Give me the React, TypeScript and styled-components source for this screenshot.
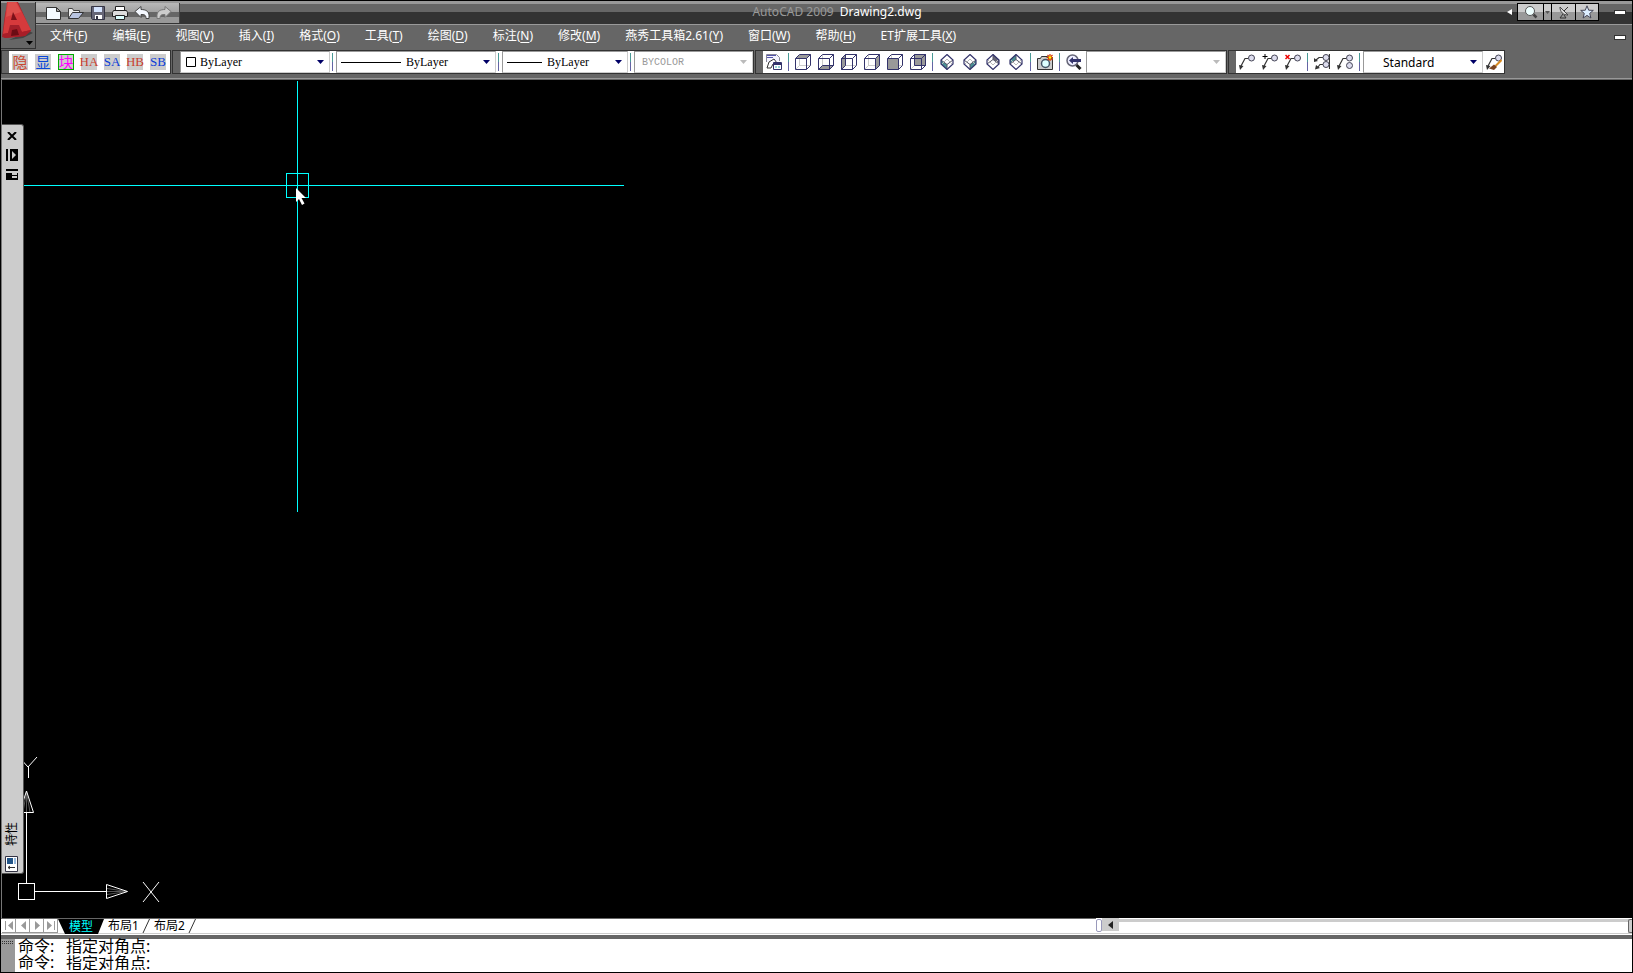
import React from "react";
import styled, { createGlobalStyle } from "styled-components";

const UI = `"Noto Sans", "Noto Sans CJK SC", sans-serif`;
const SONG = `"Liberation Serif", "Noto Sans CJK SC", serif`;
const NAVY = "#33336b";

const GlobalStyle = createGlobalStyle`
  * { box-sizing: border-box; }
  body { margin: 0; background: #666; font-family: ${UI}; font-size: 12px; }
  button, select, input { font: inherit; color: inherit; margin: 0; padding: 0; border: 0; background: none; border-radius: 0; }
  svg { display: block; flex: none; }
`;

const Window = styled.div`
  display: flex;
  flex-direction: column;
  height: 100vh;
  border: 1px solid #000;
  background: #666;
  overflow: hidden;
`;

/* ---------- title and menus ---------- */

const Header = styled.header`
  display: grid;
  grid-template-columns: 35px 1fr;
  background: linear-gradient(#999 0 2px, #666 2px);
`;

const AppButton = styled.button`
  grid-row: 1 / 3;
  height: 47px;
  margin-top: 1px;
  border-right: 1px solid #333;
  border-bottom: 1px solid #333;
`;

const TitleBar = styled.div`
  display: grid;
  grid-template-columns: 1fr auto 1fr;
  height: 24px;
  background: linear-gradient(#999 0 3px, #666 3px 11px, #333 11px);
  border-bottom: 1px solid #999;
`;

const QuickAccess = styled.div`
  display: flex;
  align-items: center;
  justify-self: start;
  height: 20px;
  margin-top: 2px;
  padding: 0 5px 0 8px;
  gap: 2px;
  background: linear-gradient(#b8b8b8, #a2a2a2 9px, #666 9px 14px, #999 14px);
  border-right: 1px solid #444;
`;

const QuickButton = styled.button`
  display: grid;
  place-items: center;
  width: 20px;
  height: 20px;
`;

const Title = styled.h1`
  display: flex;
  gap: 6px;
  margin: 0;
  padding-left: 6px;
  font-size: 12px;
  font-weight: 400;
  line-height: 21px;
  color: #fff;
`;

const Product = styled.span`
  color: #999;
`;

const InfoArea = styled.div`
  display: flex;
  align-items: flex-start;
  justify-self: end;
  padding: 2px 4px 0 0;
`;

const Collapse = styled.button`
  display: grid;
  place-items: center;
  width: 16px;
  height: 18px;
`;

const InfoButton = styled.button<{ $w: number }>`
  display: grid;
  place-items: center;
  width: ${(p) => p.$w}px;
  height: 18px;
  margin-right: -1px;
  border: 1px solid #000;
  background: linear-gradient(#ccc 0 8px, #999 8px);
`;

const Minimize = styled.button`
  width: 12px;
  height: 5px;
  background: #fff;
  border: 1px solid #333;
`;

const MenuBar = styled.nav`
  display: flex;
  align-items: center;
  gap: 25px;
  height: 25px;
  padding: 0 6px 0 14px;
  color: #fff;
`;

const MenuItem = styled.button`
  white-space: nowrap;
  line-height: 18px;
  padding-bottom: 4px;

  u { text-underline-offset: 2px; }
`;

const Spacer = styled.div<{ $w?: number }>`
  flex: ${(p) => (p.$w ? "none" : 1)};
  width: ${(p) => (p.$w ? `${p.$w}px` : "auto")};
`;

/* ---------- toolbars ---------- */

const ToolRow = styled.div`
  display: flex;
  gap: 1px;
  height: 30px;
  padding-bottom: 6px;
  background: linear-gradient(#666 0 28px, #999 28px 29px, #666 29px);
`;

const ToolPanel = styled.div`
  display: flex;
  border: 1px solid #333;
  background: #fff;

  &::before {
    content: "";
    width: 7px;
    background: #666;
  }
`;

const ToolButton = styled.button`
  display: flex;
  align-items: center;
  width: 23px;
  height: 22px;
  padding-left: 3px;
`;

const NarrowToolButton = styled(ToolButton)`
  width: 21px;
`;

const Glyph = styled.span<{ $color: string; $framed?: boolean; $cjk?: boolean }>`
  display: flex;
  align-items: center;
  justify-content: center;
  width: 16px;
  height: 16px;
  background: #ccc;
  color: ${(p) => p.$color};
  font-family: ${(p) => (p.$cjk ? UI : SONG)};
  font-size: ${(p) => (p.$cjk ? 15 : 13)}px;
  line-height: 16px;
  outline: ${(p) => (p.$framed ? "1px solid #0a0" : "none")};
  outline-offset: -1px;
`;

const Divider = styled.span`
  width: 6px;
  padding: 2px 3px 2px 2px;

  &::before {
    content: "";
    display: block;
    width: 1px;
    height: 18px;
    background: linear-gradient(#4a9a96 50%, #6464a4 50%);
  }
`;

const Combo = styled.label<{ $w: number; $off?: boolean }>`
  display: grid;
  align-items: center;
  width: ${(p) => p.$w}px;
  height: 22px;
  border: 1px solid #999;
  border-right-color: #ccc;
  border-bottom-color: #ccc;
  color: ${(p) => (p.$off ? "#999" : "#000")};
`;

const ComboSelect = styled.select<{ $pad: number; $font?: string; $size?: number }>`
  grid-area: 1 / 1;
  width: 100%;
  height: 20px;
  appearance: none;
  padding-left: ${(p) => p.$pad}px;
  font-family: ${(p) => p.$font ?? SONG};
  font-size: ${(p) => p.$size ?? 12}px;
`;

const ComboMark = styled.svg`
  grid-area: 1 / 1;
  pointer-events: none;
`;

const ComboArrow = styled.svg`
  grid-area: 1 / 1;
  justify-self: end;
  margin-right: 5px;
  pointer-events: none;
`;

/* ---------- drawing area ---------- */

const Canvas = styled.main`
  position: relative;
  flex: 1;
  min-height: 0;
  background: #000;
  border-left: 1px solid #777;
  overflow: hidden;
`;

const Crosshair = styled.svg`
  position: absolute;
  left: -1px;
  top: 0;
`;

const UcsIcon = styled.svg`
  position: absolute;
  left: -1px;
  bottom: 0;
`;

const Palette = styled.aside`
  position: absolute;
  left: -1px;
  top: 44px;
  bottom: 44px;
  display: flex;
  flex-direction: column;
  align-items: center;
  gap: 7px;
  width: 23px;
  padding: 5px 1px 1px 0;
  background: #ccc;
  border: 1px solid #555;
  border-left: 0;
  border-radius: 0 3px 3px 0;
`;

const PaletteButton = styled.button`
  display: grid;
  place-items: center;
  width: 14px;
  height: 12px;
`;

const PaletteTitle = styled.span`
  writing-mode: vertical-rl;
  text-orientation: sideways;
  transform: rotate(180deg);
  padding-top: 3px;
  line-height: 14px;
  color: #000;
`;

/* ---------- layout tabs ---------- */

const TabStrip = styled.div`
  display: flex;
  height: 17px;
  background: #fff;
  border-bottom: 1px solid #fff;
  box-shadow: inset 0 -1px #ccc;
`;

const TabSide = styled.div`
  display: flex;
  flex: 1095 1 0;
  padding-left: 1px;
  border-top: 1px solid #666;
`;

const NavButton = styled.button`
  display: grid;
  place-items: center;
  width: 14px;
  height: 14px;
  border-right: 1px solid #999;
  border-bottom: 1px solid #999;
`;

const ActiveTab = styled.button`
  width: 46px;
  height: 15px;
  background: #000;
  color: #0ff;
  line-height: 14px;
  clip-path: polygon(0 0, 100% 0, 40px 100%, 7px 100%);
`;

const Tab = styled.button`
  height: 14px;
  margin-left: 4px;
  line-height: 14px;
  color: #000;
`;

const Slash = styled.svg`
  margin-left: 3px;
`;

const ScrollSide = styled.div`
  display: flex;
  flex: 536 1 0;
`;

const Splitter = styled.div`
  width: 6px;
  height: 13px;
  margin-top: 1px;
  border: 1px solid #99b;
  border-radius: 2px;
`;

const ScrollButton = styled.button`
  display: grid;
  place-items: center;
  width: 17px;
  height: 13px;
  background: #ccc;
`;

const Track = styled.div`
  flex: 1;
  height: 14px;
  margin-top: 1px;
  border-top: 3px solid #ccc;
`;

const Thumb = styled.div`
  width: 4px;
  height: 14px;
  margin-top: 1px;
  background: #ccc;
  border: 1px solid #666;
  border-right: 0;
  border-radius: 2px 0 0 2px;
`;

/* ---------- command window ---------- */

const CommandWindow = styled.section`
  display: grid;
  grid-template-columns: 14px 1fr;
  border-top: 4px solid #666;
  background: #fff;
`;

const CommandGrip = styled.div`
  padding: 2px 1px;
  background: #999;

  &::before {
    content: "";
    display: block;
    height: 4px;
    background: conic-gradient(#999 75%, #333 75%) 0 0 / 2px 2px;
  }
`;

const CommandLines = styled.div`
  height: 34px;
  margin-top: -1px;
  padding-left: 3px;
  font-size: 16px;
  color: #000;
`;

const CommandLine = styled.label`
  display: flex;
  height: 16px;
  line-height: 16px;
`;

const Prompt = styled.span`
  width: 48px;
`;

const CommandInput = styled.input`
  flex: 1;
  height: 16px;
  line-height: 16px;
  outline: none;
`;

/* ---------- drawings ---------- */

const AppLogo = () => (
  <svg width="34" height="46" viewBox="0 0 34 46">
    <path d="M8 38 L22 36 L32 31 L28 29Z" fill="#444" />
    <path d="M7 0 L17 0 L30 29 L24 34 L4 36 L1 35 L4 12Z" fill="#a3202a" />
    <path d="M6 0 L16 0 L30 28 L21 30 L18 23 L9 23 L7 31 L2 32Z" fill="#d63a3c" />
    <path d="M7 0 L15 0 L20 10 L5 15Z" fill="#de4f4c" />
    <path d="M12 10 L16 18 L10 18Z" fill="#7b1119" />
    <path d="M2 32 L7 31 L9 27 L17 26 L21 30 L30 28 L24 34 L4 36Z" fill="#a81e28" />
    <path d="M11 28 L16 27 L18 33 L10 34Z" fill="#6b0c14" />
    <path d="M25 39h7l-3.500 4z" fill="#000" />
  </svg>
);

const quickIcons: { label: string; art: React.ReactNode }[] = [
  { label: "新建", art: <path d="M.5 2.500h10l4 4v8H.5z M10.500 2.500v4h4" fill="#f4faff" stroke="#333" /> },
  {
    label: "打开",
    art: (
      <>
        <path d="M.5 13.500v-10h4l1 2h6v3" fill="#eee" stroke="#444" />
        <path d="M.5 13.500l4-6h11l-5 6z" fill="#b9c4e0" stroke="#333" />
      </>
    ),
  },
  {
    label: "保存",
    art: (
      <>
        <path d="M1.500 1.500h13v13h-12l-1-1z" fill="#667" stroke="#334" />
        <path d="M4 2h8v5H4z" fill="#d5e4ff" />
        <path d="M5 10h7v4H5z" fill="#fff" />
        <path d="M6 11h2v3H6z" fill="#334" />
      </>
    ),
  },
  {
    label: "打印",
    art: (
      <>
        <path d="M3.500 6v-4.500h9V6" fill="#fff" stroke="#222" />
        <path d="M1.500 5.500h13l1 2v4h-15v-4z" fill="#ddd" stroke="#222" />
        <path d="M3.500 10.500h9v4h-9z" fill="#dff" stroke="#222" />
      </>
    ),
  },
  { label: "放弃", art: <path d="M1 6.500l6-5v3c5 0 8 2 8 6v3h-3c0-4-2-4-5-4v3z" fill="#f4f8ff" stroke="#444" /> },
  { label: "重做", art: <path d="M15 6.500l-6-5v3c-5 0-8 2-8 6v3h3c0-4 2-4 5-4v3z" fill="#ccc" stroke="#777" /> },
];

const Icon = ({ children }: { children: React.ReactNode }) => (
  <svg width="16" height="16" viewBox="0 0 16 16" fill="none">
    {children}
  </svg>
);

const cubeFaces: Record<string, string> = {
  俯视: "M.5 4.500l4-4h11l-4 4z",
  仰视: "M.5 15.500l4-4h11l-4 4z",
  左视: "M.5 4.500l4-4v11l-4 4z",
  右视: "M11.500 4.500l4-4v11l-4 4z",
  主视: "M.5 4.500h11v11H.5z",
  后视: "M4.500.5h11v11h-11z",
};

const Cube = ({ face }: { face: string }) => {
  const open = face === "仰视" || face === "左视" || face === "后视";
  return (
    <Icon>
      <g shapeRendering="crispEdges">
        <path d="M4.500 1v10.500H15M4.500 11.500l-4 4" stroke="#ccc" />
        <path d={cubeFaces[face]} fill="#999" />
      </g>
      <path d="M.5 4.500h11v11H.5zM.5 4.500l4-4h11l-4 4M15.500.5v11l-4 4" stroke={NAVY} />
      {open && <path d={cubeFaces[face]} stroke={NAVY} />}
    </Icon>
  );
};

const isoFaces: Record<string, string> = {
  西南等轴测: "M2 6l6 4.500V15.500L2 10z",
  东南等轴测: "M14 6l-6 4.500V15.500L14 10z",
  东北等轴测: "M8 .5l6 5v4l-6-4z",
  西北等轴测: "M8 .5l-6 5v4l6-4z",
};

const Iso = ({ face }: { face: string }) => {
  const south = face.includes("南");
  return (
    <Icon>
      <path d={isoFaces[face]} fill={face[0] === "东" && !south ? "#667" : "#4a8f93"} />
      <path d={south ? "M2 6l6 4.500 6-4.500M8 10.500v5" : "M2 10l6-4.500 6 4.500M8 .5v5"} stroke="#556" />
      <path d={south ? "M3 10l5-5 5 5" : "M3 6l5 5 5-5"} stroke="#bbb" />
      <path d="M8 .5l6 5.500v4l-6 5.500L2 10V6z" stroke={NAVY} strokeWidth="1.200" />
    </Icon>
  );
};

const Leader = ({ children }: { children?: React.ReactNode }) => (
  <Icon>
    <path d="M9 4.500H6L2 12" stroke="#333" strokeWidth="1.200" />
    <path d="M0 11l4.500 1L1 16z" fill="#333" />
    <circle cx="12.500" cy="4" r="3" fill="#dde" stroke="#445" />
    {children}
  </Icon>
);

const Arrow = ({ off }: { off?: boolean }) => (
  <ComboArrow width="7" height="4" viewBox="0 0 7 4">
    <path d="M0 0h7L3.500 4z" fill={off ? "#bbb" : "#006"} />
  </ComboArrow>
);

const menus: [string, string][] = [
  ["文件", "F"],
  ["编辑", "E"],
  ["视图", "V"],
  ["插入", "I"],
  ["格式", "O"],
  ["工具", "T"],
  ["绘图", "D"],
  ["标注", "N"],
  ["修改", "M"],
  ["燕秀工具箱2.61", "Y"],
  ["窗口", "W"],
  ["帮助", "H"],
  ["ET扩展工具", "X"],
];

const layerTools = [
  { text: "隐", color: "#c9482f", cjk: true },
  { text: "显", color: "#0a48d8", cjk: true },
  { text: "块", color: "#f0f", cjk: true, framed: true },
  { text: "HA", color: "#c9402f" },
  { text: "SA", color: "#0a3cd8" },
  { text: "HB", color: "#c9402f" },
  { text: "SB", color: "#0a3cd8" },
];

const navArrows = [
  { label: "第一个", d: "M1 0h1v9H1zM9 0v9L4 4.500z" },
  { label: "上一个", d: "M8 0v9L3 4.500z" },
  { label: "下一个", d: "M3 0v9l5-4.500z" },
  { label: "最后一个", d: "M1 0v9l5-4.500zM8 0h1v9H8z" },
];

const TabSlash = () => (
  <Slash width="8" height="14" viewBox="0 0 8 14">
    <path d="M7.500 0L1 14" stroke="#333" fill="none" />
  </Slash>
);

export default function App() {
  return (
    <Window>
      <GlobalStyle />
      <Header>
        <AppButton aria-label="菜单浏览器">
          <AppLogo />
        </AppButton>
        <TitleBar>
          <QuickAccess>
            {quickIcons.map((q) => (
              <QuickButton key={q.label} aria-label={q.label}>
                <Icon>{q.art}</Icon>
              </QuickButton>
            ))}
          </QuickAccess>
          <Title>
            <Product>AutoCAD 2009</Product>
            <span>Drawing2.dwg</span>
          </Title>
          <InfoArea>
            <Collapse aria-label="收拢">
              <svg width="5" height="6" viewBox="0 0 5 6">
                <path d="M5 0v6L0 3z" fill="#fff" />
              </svg>
            </Collapse>
            <InfoButton $w={27} aria-label="搜索">
              <svg width="14" height="14" viewBox="0 0 14 14" fill="none">
                <circle cx="6" cy="6" r="4.500" fill="#eff" stroke="#555" />
                <path d="M9.500 9.500l3 3" stroke="#444" strokeWidth="2.500" />
              </svg>
            </InfoButton>
            <InfoButton $w={9} aria-label="搜索选项">
              <svg width="5" height="3" viewBox="0 0 5 3">
                <path d="M0 0h5L2.500 3z" fill="#555" />
              </svg>
            </InfoButton>
            <InfoButton $w={25} aria-label="通讯中心">
              <svg width="12" height="13" viewBox="0 0 12 13" fill="none">
                <path d="M2 1c0 5 3 8 8 8z" fill="#ddd" stroke="#444" />
                <path d="M6 5l4-4M5 8l-3 4h6l-2-3" stroke="#333" />
              </svg>
            </InfoButton>
            <InfoButton $w={24} aria-label="收藏夹">
              <svg width="14" height="14" viewBox="0 0 14 14">
                <path d="M7 .8l1.700 4.400 4.600.2-3.600 3 1.200 4.600L7 10.400 3.100 13l1.200-4.600-3.600-3 4.600-.2z" fill="#def" stroke="#445" />
              </svg>
            </InfoButton>
            <Spacer $w={14} />
            <Collapse as="div">
              <Minimize aria-label="最小化" />
            </Collapse>
          </InfoArea>
        </TitleBar>
        <MenuBar>
          {menus.map(([name, key]) => (
            <MenuItem key={name}>
              {name}(<u>{key}</u>)
            </MenuItem>
          ))}
          <Spacer />
          <Minimize aria-label="最小化图形" />
        </MenuBar>
      </Header>

      <ToolRow>
        <ToolPanel>
          {layerTools.map((t) => (
            <ToolButton key={t.text}>
              <Glyph $color={t.color} $cjk={t.cjk} $framed={t.framed}>
                {t.text}
              </Glyph>
            </ToolButton>
          ))}
        </ToolPanel>

        <ToolPanel>
          <Combo $w={150}>
            <ComboSelect aria-label="颜色" $pad={19}>
              <option>ByLayer</option>
            </ComboSelect>
            <ComboMark width="16" height="10" viewBox="0 0 16 10">
              <path d="M5.500.5h9v9h-9z" fill="#fff" stroke="#000" />
            </ComboMark>
            <Arrow />
          </Combo>
          <Divider />
          <Combo $w={160}>
            <ComboSelect aria-label="线型" $pad={69}>
              <option>ByLayer</option>
            </ComboSelect>
            <ComboMark width="64" height="1">
              <path d="M4 0h60v1H4z" />
            </ComboMark>
            <Arrow />
          </Combo>
          <Divider />
          <Combo $w={126}>
            <ComboSelect aria-label="线宽" $pad={44}>
              <option>ByLayer</option>
            </ComboSelect>
            <ComboMark width="39" height="1">
              <path d="M4 0h35v1H4z" />
            </ComboMark>
            <Arrow />
          </Combo>
          <Divider />
          <Combo $w={119} $off>
            <ComboSelect aria-label="打印样式" $pad={7} $font={`"Liberation Mono", monospace`} $size={10}>
              <option>BYCOLOR</option>
            </ComboSelect>
            <Arrow off />
          </Combo>
        </ToolPanel>

        <ToolPanel>
          <ToolButton aria-label="命名视图">
            <Icon>
              <path d="M.5 8V.5h10l3 3V7" fill="#f4f4ff" stroke="#889" />
              <path d="M1 1.500h9M1 3.500h6" stroke="#55a" />
              <path d="M1 14l2-6 5-3 3 4-4 1-2 4z" fill="#fff" stroke="#333" />
              <path d="M7.500 8.500h8v7h-8z" fill="#fff" stroke={NAVY} />
              <path d="M8 9h7v2H8z" fill={NAVY} />
              <path d="M9 13h2M12 13h2" stroke="#3aa" />
            </Icon>
          </ToolButton>
          <Divider />
          {Object.keys(cubeFaces).map((f) => (
            <ToolButton key={f} aria-label={f}>
              <Cube face={f} />
            </ToolButton>
          ))}
          <Divider />
          {Object.keys(isoFaces).map((f) => (
            <ToolButton key={f} aria-label={f}>
              <Iso face={f} />
            </ToolButton>
          ))}
          <Divider />
          <ToolButton aria-label="相机">
            <Icon>
              <path d="M.5 4.500h3l1-2h6l1 2h4v11H.5z" fill="#ccc" stroke="#333" />
              <circle cx="8.500" cy="9.500" r="4" fill="#dff" stroke="#456" strokeWidth="1.500" />
              <path d="M13 0v7M9.500 3.500h7M10.500 1l5 5M15.500 1l-5 5" stroke="#d33a00" strokeWidth="1.200" />
              <circle cx="13" cy="3.500" r="1.300" fill="#ff0" />
            </Icon>
          </ToolButton>
          <Divider />
          <ToolButton aria-label="上一个视图">
            <Icon>
              <circle cx="6.500" cy="6.500" r="5.500" fill="#eef" stroke="#667" strokeWidth="1.500" />
              <path d="M10.500 11l4 4" stroke="#222" strokeWidth="3" />
              <path d="M3 6.500l4-3.500v2h8v3H7v2z" fill={NAVY} />
            </Icon>
          </ToolButton>
          <Combo $w={140} $off>
            <ComboSelect aria-label="视图" $pad={8}>
              <option />
            </ComboSelect>
            <Arrow off />
          </Combo>
        </ToolPanel>

        <ToolPanel>
          <ToolButton aria-label="多重引线">
            <Leader />
          </ToolButton>
          <ToolButton aria-label="添加引线">
            <Leader>
              <path d="M3 0v5M.5 2.500h5" stroke="#000" />
            </Leader>
          </ToolButton>
          <ToolButton aria-label="删除引线">
            <Leader>
              <path d="M.5 1l4 4M4.500 1l-4 4" stroke="#e00" strokeWidth="1.500" />
            </Leader>
          </ToolButton>
          <Divider />
          <ToolButton aria-label="多重引线对齐">
            <Icon>
              <path d="M9 3.500H5L2 6M9 10.500H6L4 13M15.500 0v15" stroke="#333" strokeWidth="1.200" />
              <path d="M0 4l4 3-4 1zM2 11l4 3-5 1.500z" fill="#333" />
              <circle cx="12" cy="3.500" r="3" fill="#dde" stroke="#445" />
              <circle cx="12" cy="10.500" r="3" fill="#dde" stroke="#445" />
            </Icon>
          </ToolButton>
          <ToolButton aria-label="多重引线合并">
            <Leader>
              <circle cx="12.500" cy="11.500" r="3" fill="#dde" stroke="#445" />
            </Leader>
          </ToolButton>
          <Divider />
          <Combo $w={120}>
            <ComboSelect aria-label="多重引线样式" $pad={19} $font={UI}>
              <option>Standard</option>
            </ComboSelect>
            <Arrow />
          </Combo>
          <NarrowToolButton aria-label="多重引线样式管理器">
            <Leader>
              <path d="M15.500 6l-6 6" stroke="#d78a20" strokeWidth="2" />
              <path d="M3 14.500l5-4 3 2.500-3 3z" fill="#7a4420" />
            </Leader>
          </NarrowToolButton>
        </ToolPanel>
      </ToolRow>

      <Canvas>
        <Crosshair width="640" height="440" viewBox="0 0 640 440" fill="none" stroke="#0ff">
          <path d="M296.500 1v431M23 105.500h600" shapeRendering="crispEdges" />
          <path d="M285.500 93.500h22v24h-22z" shapeRendering="crispEdges" />
          <path d="M295 108v14l3-3 3 6 2.500-1.500-3-5.500h4.500z" fill="#fff" stroke="none" />
        </Crosshair>
        <UcsIcon width="170" height="170" viewBox="0 0 170 170" fill="none" stroke="#fff">
          <path d="M17.500 135.500h16v16h-16zM33 143.500h72M25.500 64v71" shapeRendering="crispEdges" />
          <path d="M106 140.500l20 3-20 3M106 143.500h20M22 64l3.500-20 3.500 20M25.500 64V44" stroke="#555" />
          <path d="M105.500 136.500v14l21-7zM18.500 64.500h14L25.500 43z" />
          <path d="M142 134l16 20M158 134l-16 20M18 9l9 10 9-10M27.500 19v11" />
        </UcsIcon>
        <Palette>
          <PaletteButton aria-label="关闭">
            <svg width="10" height="8" viewBox="0 0 10 8">
              <path d="M1 0l8 8M9 0L1 8" stroke="#000" strokeWidth="2" />
            </svg>
          </PaletteButton>
          <PaletteButton aria-label="自动隐藏">
            <svg width="12" height="12" viewBox="0 0 12 12">
              <path d="M0 0h2v12H0zM4 0H12v12H4z" />
              <path d="M6 2v8l4-4z" fill="#ccc" />
            </svg>
          </PaletteButton>
          <PaletteButton aria-label="特性菜单">
            <svg width="12" height="11" viewBox="0 0 12 11">
              <path d="M0 0h12v2H0zM0 3h12v8H0z" />
              <path d="M6 4h5v2H6zM6 7h5v2H6zM0 3h12v1H0z" fill="#ccc" />
            </svg>
          </PaletteButton>
          <Spacer />
          <PaletteTitle>特性</PaletteTitle>
          <svg width="13" height="16" viewBox="0 0 13 16">
            <path d="M.5.5h12v15H.5z" fill="#fff" stroke="#334" />
            <path d="M2 2h6v6H2z" fill="#258" />
            <path d="M9 2h2v6H9z" fill="#9bd" />
            <path d="M3 11.500h7M3 11.500l2-1.500M3 11.500l2 1.500" stroke="#333" fill="none" />
          </svg>
        </Palette>
      </Canvas>

      <TabStrip>
        <TabSide>
          {navArrows.map((n) => (
            <NavButton key={n.label} aria-label={n.label}>
              <svg width="10" height="9" viewBox="0 0 10 9">
                <path d={n.d} fill="#999" />
              </svg>
            </NavButton>
          ))}
          <ActiveTab>模型</ActiveTab>
          <Tab>布局1</Tab>
          <TabSlash />
          <Tab>布局2</Tab>
          <TabSlash />
        </TabSide>
        <ScrollSide>
          <Splitter />
          <ScrollButton aria-label="向左滚动">
            <svg width="5" height="8" viewBox="0 0 5 8">
              <path d="M5 0v8L0 4z" fill="#222" />
            </svg>
          </ScrollButton>
          <Track />
          <Thumb />
        </ScrollSide>
      </TabStrip>

      <CommandWindow>
        <CommandGrip />
        <CommandLines>
          <CommandLine as="div">
            <Prompt>命令:</Prompt>
            <span>指定对角点:</span>
          </CommandLine>
          <CommandLine>
            <Prompt>命令:</Prompt>
            <CommandInput defaultValue="指定对角点:" />
          </CommandLine>
        </CommandLines>
      </CommandWindow>
    </Window>
  );
}
